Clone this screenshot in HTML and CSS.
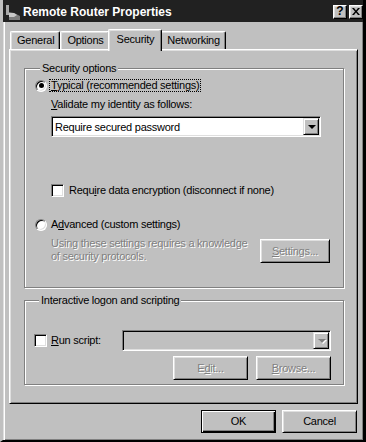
FILE: index.html
```html
<!DOCTYPE html>
<html>
<head>
  <meta charset="UTF-8">
  <title>Remote Router Properties</title>
  <link rel="stylesheet" href="styles.css">
</head>
<body>
  <div class="window">

    <div class="titlebar">
      <svg class="app_icon" width="16" height="16" viewBox="0 0 16 16">
        <path d="M1 1h3v10H1z" fill="#a8a8a8"/>
        <path d="M4 8l5 1 6 3v4H4z" fill="#7c7c7c"/>
        <path d="M4 9h5l3 2-3 2H4z" fill="#c8c8c8"/>
      </svg>
      <span class="title">Remote Router Properties</span>
      <span class="cap_btn help">?</span>
      <span class="cap_btn close">
        <svg width="8" height="7" viewBox="0 0 8 7">
          <path d="M0 0h2l2 2.5L6 0h2L5 3.5 8 7H6L4 4.5 2 7H0l3-3.5z" fill="#000"/>
        </svg>
      </span>
    </div>

    <div class="client">
      <div class="tabs">
        <div class="tab">General</div>
        <div class="tab">Options</div>
        <div class="tab active">Security</div>
        <div class="tab">Networking</div>
      </div>

      <div class="panel">
        <!-- 安全选项 -->
        <fieldset class="group security">
          <legend>Security options</legend>
          <div class="option">
            <span class="radio checked"></span>
            <span class="focus"><u>T</u>ypical (recommended settings)</span>
          </div>
          <div class="field_label"><u>V</u>alidate my identity as follows:</div>
          <div class="select">
            <span class="value">Require secured password</span>
            <span class="drop"><i class="arrow"></i></span>
          </div>
          <div class="check_row">
            <span class="checkbox"></span>
            <span>Requ<u>i</u>re data encryption (disconnect if none)</span>
          </div>
          <div class="option advanced">
            <span class="radio"></span>
            <span class="text">A<u>d</u>vanced (custom settings)</span>
          </div>
          <div class="advanced_row">
            <p class="hint disabled">Using these settings requires a knowledge<br>of security protocols.</p>
            <button class="btn settings disabled" type="button"><u>S</u>ettings...</button>
          </div>
        </fieldset>

        <!-- 交互登录与脚本 -->
        <fieldset class="group scripting">
          <legend>Interactive logon and scripting</legend>
          <div class="script_row">
            <span class="checkbox"></span>
            <span class="text"><u>R</u>un script:</span>
            <div class="select off">
              <span class="value"></span>
              <span class="drop"><i class="arrow"></i></span>
            </div>
          </div>
          <div class="btn_group">
            <button class="btn disabled" type="button">E<u>d</u>it...</button>
            <button class="btn disabled" type="button"><u>B</u>rowse...</button>
          </div>
        </fieldset>
      </div>

      <div class="dialog_btns">
        <button class="btn default" type="button">OK</button>
        <button class="btn" type="button">Cancel</button>
      </div>
    </div>

  </div>
</body>
</html>
```

FILE: styles.css
```css
* { box-sizing: border-box; }

body {
  margin: 0;
  font: 11px/13px "Liberation Sans", Arial, sans-serif;
  letter-spacing: -0.25px;
  color: #000;
}

u { text-decoration: underline; text-underline-offset: 1px; }

.window {
  width: 366px;
  height: 442px;
  background: #c0c0c0;
  border-left: 3px solid #c0c0c0;
  border-right: 3px solid #000;
  border-bottom: 2px solid #000;
  box-shadow: inset 1px 0 #dfdfdf, inset 2px 0 #fff, inset -1px -1px #808080;
}

/* title bar */
.titlebar {
  height: 22px;
  background: #212121;
  display: flex;
  align-items: center;
  padding: 1px 0 0 2px;
}
  .app_icon { margin-right: 2px; }
  .title {
    flex: 1;
    color: #fff;
    font: bold 12px/14px "Liberation Sans", Arial, sans-serif;
    letter-spacing: 0;
  }
  .cap_btn {
    width: 14px;
    height: 14px;
    display: flex;
    align-items: center;
    justify-content: center;
    background: #c0c0c0;
    border: 1px solid;
    border-color: #fff #000 #000 #fff;
    box-shadow: inset -1px -1px #808080, inset 1px 1px #dfdfdf;
    font: bold 12px/11px "Liberation Sans", Arial, sans-serif;
    letter-spacing: 0;
  }
  .cap_btn.help { margin-right: 2px; }

/* dialog client area */
.client {
  padding: 7px 5px 0 6px;
}

.tabs {
  display: flex;
  align-items: flex-end;
  height: 20px;
  padding-left: 1px;
}
  .tab {
    height: 18px;
    padding: 2px 5px 0 6px;
    border: 1px solid;
    border-color: #fff #000 transparent #fff;
    border-bottom: 0;
    border-radius: 2px 2px 0 0;
    box-shadow: inset -1px 0 #808080, inset 1px 1px #dfdfdf;
    white-space: nowrap;
  }
  .tab.active {
    position: relative;
    z-index: 1;
    height: 22px;
    margin: 0 -2px -2px;
    padding: 3px 7px 0 8px;
    background: #c0c0c0;
  }

.panel {
  height: 355px;
  padding-top: 12px;
  border: 1px solid;
  border-color: #fff #000 #000 #fff;
  box-shadow: inset 1px 1px #dfdfdf, inset -1px -1px #808080;
}

.group {
  margin: 0 0 0 14px;
  width: 320px;
  min-inline-size: 0;
  border: 1px solid #808080;
  box-shadow: inset 1px 1px #fff, 1px 1px #fff;
}
  .group legend {
    margin-left: 5px;
    padding: 0 2px;
    background: #c0c0c0;
    line-height: 13px;
  }
  .group.security { padding: 0 0 24px 10px; }
  .group.scripting {
    margin-top: 6px;
    padding: 0 12px 4px 9px;
  }

.option {
  display: flex;
  align-items: center;
  height: 13px;
  margin-top: 4px;
}
  .option.advanced { margin-top: 21px; }
  .option .text { margin-left: 4px; }

.radio {
  width: 12px;
  height: 12px;
  border-radius: 50%;
  background: #fff;
  border: 1px solid;
  border-color: #808080 #fff #fff #808080;
  box-shadow: inset 1px 1px #000, inset -1px -1px #dfdfdf;
  display: flex;
  align-items: center;
  justify-content: center;
}
  .radio.checked::after {
    content: "";
    width: 5px;
    height: 5px;
    border-radius: 50%;
    background: #000;
  }

.focus {
  margin-left: 2px;
  padding: 0 1px;
  border: 1px dotted #000;
  line-height: 11px;
}

.checkbox {
  width: 13px;
  height: 13px;
  flex: none;
  background: #fff;
  border: 1px solid;
  border-color: #808080 #fff #fff #808080;
  box-shadow: inset 1px 1px #000, inset -1px -1px #dfdfdf;
}

.field_label {
  margin-top: 6px;
  padding-left: 16px;
}

.select {
  display: flex;
  align-items: center;
  width: 270px;
  height: 21px;
  margin: 5px 0 0 16px;
  padding: 1px;
  background: #fff;
  border: 1px solid;
  border-color: #808080 #fff #fff #808080;
  box-shadow: inset 1px 1px #000, inset -1px -1px #dfdfdf;
}
  .select .value {
    flex: 1;
    padding-left: 2px;
    margin-top: 1px;
  }
  .select .drop {
    width: 16px;
    height: 17px;
    display: flex;
    align-items: center;
    justify-content: center;
    background: #c0c0c0;
    border: 1px solid;
    border-color: #dfdfdf #000 #000 #dfdfdf;
    box-shadow: inset 1px 1px #fff, inset -1px -1px #808080;
  }
  .arrow {
    width: 0;
    height: 0;
    border-left: 4px solid transparent;
    border-right: 4px solid transparent;
    border-top: 4px solid #000;
    margin-left: 1px;
  }
  .select.off { background: #c0c0c0; margin: 0 0 0 auto; width: 209px; }
  .select.off .arrow {
    border-top-color: #808080;
    filter: drop-shadow(1px 1px 0 #fff);
  }

.check_row {
  display: flex;
  align-items: center;
  margin-top: 47px;
  padding-left: 16px;
  height: 13px;
}
  .check_row .checkbox { margin-right: 5px; }

.advanced_row {
  display: flex;
  align-items: flex-start;
  margin-top: 6px;
  padding-left: 16px;
}
  .hint {
    width: 209px;
    margin: 0;
  }

.disabled {
  color: #808080;
  text-shadow: 1px 1px 0 #fff;
}

.btn {
  display: inline-block;
  width: 75px;
  height: 23px;
  margin: 0;
  padding: 0;
  background: #c0c0c0;
  border: 1px solid;
  border-color: #fff #000 #000 #fff;
  box-shadow: inset 1px 1px #dfdfdf, inset -1px -1px #808080;
  font: 11px/13px "Liberation Sans", Arial, sans-serif;
  letter-spacing: -0.25px;
  color: #000;
  text-align: center;
}
  .btn.disabled { color: #808080; }
  .btn.settings { width: 70px; height: 24px; margin-top: 2px; }
  .btn.default {
    border-color: #000;
    box-shadow: inset 1px 1px #fff, inset -1px -1px #000, inset -2px -2px #808080;
  }

.script_row {
  display: flex;
  align-items: center;
  height: 21px;
  margin-top: 23px;
}
  .script_row .checkbox { margin-right: 4px; }

.btn_group {
  display: flex;
  justify-content: flex-end;
  gap: 8px;
  margin-top: 5px;
}
  .btn_group .btn { height: 24px; }

.dialog_btns {
  display: flex;
  justify-content: flex-end;
  gap: 6px;
  margin-top: 6px;
  padding-right: 1px;
}
```
